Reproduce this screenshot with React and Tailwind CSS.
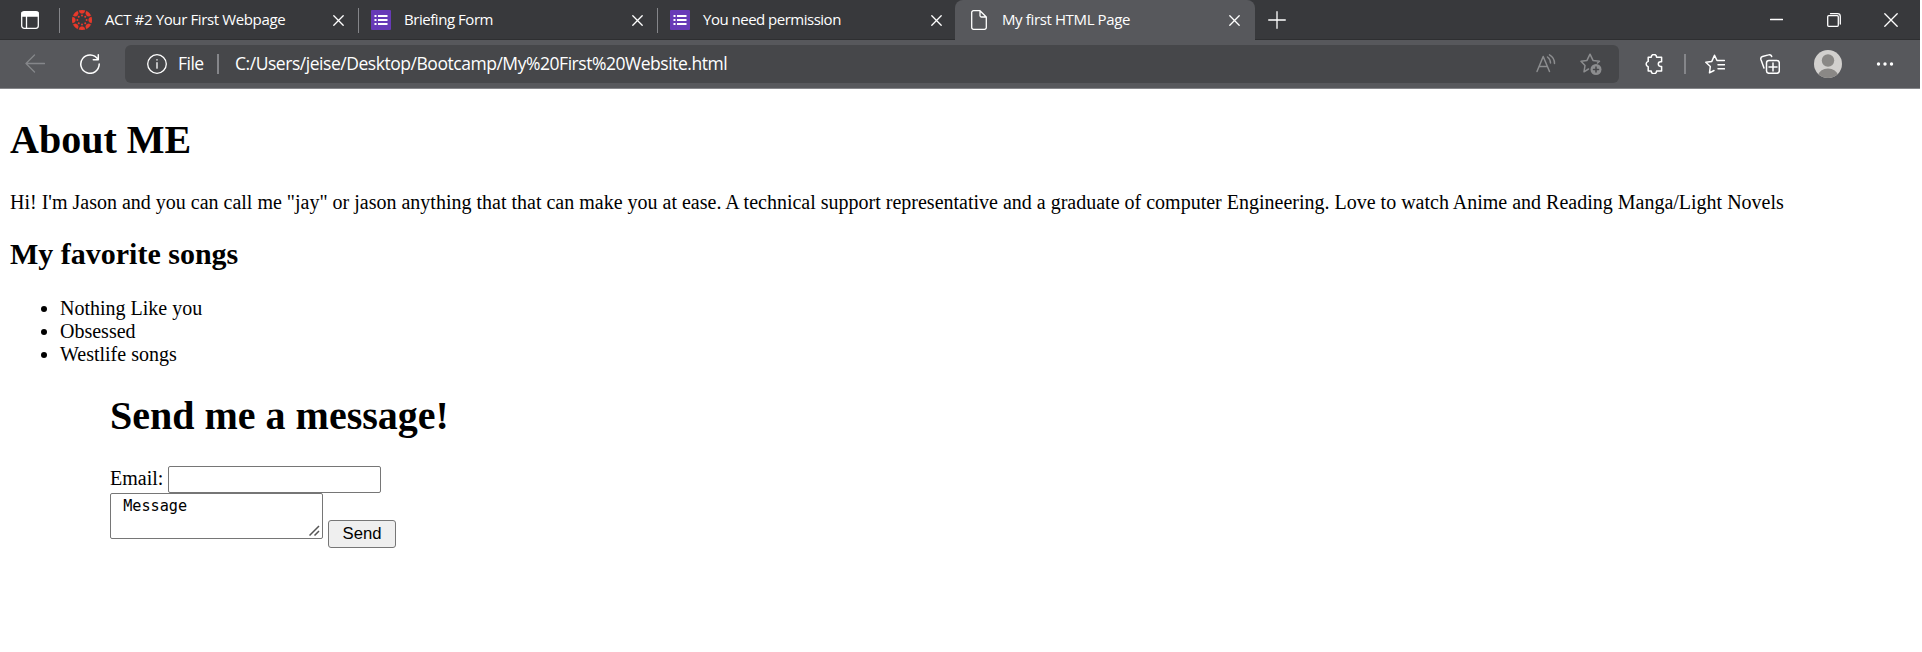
import React from "react";

const stroke = { fill: "none", stroke: "currentColor", strokeLinecap: "round", strokeLinejoin: "round" };

function Icon({ w = 20, h = 20, sw = 1.3, className = "", children }) {
  return (
    <svg width={w} height={h} viewBox={`0 0 ${w} ${h}`} strokeWidth={sw} {...stroke} className={"shrink-0 " + className}>
      {children}
    </svg>
  );
}

function CanvasLogo() {
  const angles = [0, 45, 90, 135, 180, 225, 270, 315];
  return (
    <svg width="20" height="20" viewBox="-10 -10 20 20" fill="#e8392b" className="shrink-0">
      {angles.map((a) => (
        <g key={a} transform={`rotate(${a})`}>
          <path d="M-3.100 -9.500 A10 10 0 0 1 3.100 -9.500 A3.150 3.600 0 0 1 -3.100 -9.500Z" stroke="#e8392b" strokeWidth=".3" />
          <circle cx="0" cy="-4.600" r="1" />
        </g>
      ))}
    </svg>
  );
}

function FormsLogo() {
  return (
    <svg width="20" height="20" viewBox="0 0 20 20" className="shrink-0">
      <rect width="20" height="20" rx="1" fill="#673ab7" />
      <path d="M3.5 5h2v2h-2zM3.5 9h2v2h-2zM3.5 13h2v2h-2zM7 5h9.500v2H7zM7 9h9.500v2H7zM7 13h9.500v2H7z" fill="#fff" />
    </svg>
  );
}

function FileIcon() {
  return (
    <Icon w={16} h={20} sw={1.3}>
      <path d="M2.500 .700h6.500l6.300 6.300v10.500a1.800 1.800 0 0 1-1.800 1.800h-11a1.800 1.800 0 0 1-1.800-1.800v-15a1.800 1.800 0 0 1 1.800-1.800zM9 .900v4.600a1.500 1.500 0 0 0 1.500 1.500h4.600" />
    </Icon>
  );
}

function Close() {
  return (
    <Icon w={11} h={11} sw={1.3}>
      <path d="M.8 .8l9.400 9.400M10.200 .8l-9.400 9.400" />
    </Icon>
  );
}

function Tab({ icon, title, tracking }) {
  return (
    <div className="flex h-10 w-[299px] shrink-0 items-center pr-[14px]">
      <div className="mr-[12px] h-[25px] w-px bg-[#85868a]" />
      {icon}
      <span className={"ml-[13px] flex-1 whitespace-nowrap pb-[2px] text-[15px] leading-5 " + tracking}>{title}</span>
      <Close />
    </div>
  );
}

function TabStrip() {
  return (
    <div className="flex h-10 items-center bg-[#38393c] shadow-[inset_0_-1px_0_#2e2f31]">
      <Icon w={18} h={18} className="ml-[21px] mr-[20px]">
        <rect x=".7" y=".7" width="16.600" height="16.600" rx="2.500" />
        <path d="M1 1.500h16v3.500H1z" fill="currentColor" />
        <path d="M5.500 5v12" />
      </Icon>
      <Tab icon={<CanvasLogo />} title="ACT #2 Your First Webpage" tracking="tracking-[-0.37px]" />
      <Tab icon={<FormsLogo />} title="Briefing Form" tracking="tracking-[-0.45px]" />
      <Tab icon={<FormsLogo />} title="You need permission" tracking="tracking-[-0.5px]" />
      <div className="-ml-px flex h-10 w-[300px] shrink-0 items-center rounded-t-lg bg-[#57585c] pl-[16px] pr-[15px]">
        <FileIcon />
        <span className="ml-[15px] flex-1 whitespace-nowrap pb-[2px] text-[15px] leading-5 tracking-[-0.37px]">My first HTML Page</span>
        <Close />
      </div>
      <Icon w={18} h={18} className="ml-[13px]">
        <path d="M9 .7v16.600M.7 9h16.600" />
      </Icon>
      <div className="ml-auto flex items-center pr-[22px]">
        <Icon w={13} h={14}>
          <path d="M.5 6.500h12" />
        </Icon>
        <Icon w={14} h={14} className="ml-[44px]">
          <rect x=".7" y="2.700" width="10.600" height="10.600" rx="1" />
          <path d="M3.500 .7h7a2.800 2.800 0 0 1 2.800 2.800v7.500" />
        </Icon>
        <Icon w={14} h={14} className="ml-[43px]">
          <path d="M.8 .8l12.400 12.400M13.200 .8l-12.400 12.400" />
        </Icon>
      </div>
    </div>
  );
}

function Toolbar() {
  return (
    <div className="flex h-[49px] items-center border-b border-[#85868a] bg-[#57585c]">
      <Icon className="ml-[25px] text-[#85868a]">
        <path d="M19.500 9.500H1M9.500 1L1 9.500 9.500 18" />
      </Icon>
      <Icon className="ml-[35px]" sw={1.5}>
        <path d="M17.800 5.200A9.200 9.200 0 1 0 19.200 10M18.300 .8v5h-5" />
      </Icon>
      <div className="ml-[25px] flex h-[38px] w-[1494px] shrink-0 items-center rounded-md bg-[#46474a] pl-[22px] pr-[17px] text-[17.5px]">
        <Icon>
          <circle cx="10" cy="10" r="9.300" />
          <path d="M10 8.700v5.500M10 5.700v.3" />
        </Icon>
        <span className="ml-[11px] w-[28px] whitespace-nowrap pb-px tracking-[-0.5px]">File</span>
        <div className="ml-[11px] h-5 w-[2px] bg-[#85868a]" />
        <span className="ml-[16px] flex-1 whitespace-nowrap pb-px tracking-[-0.46px]">C:/Users/jeise/Desktop/Bootcamp/My%20First%20Website.html</span>
        <Icon className="mr-[24px] text-[#8c8d8f]" sw={1.5}>
          <path d="M1 17.500L7.200 2.500l6.300 15M3.200 12.500h8M11.500 3a7.500 7.500 0 0 1 3 6M13.500 .8a10 10 0 0 1 5 8.700" />
        </Icon>
        <Icon w={22} h={22} sw={1.5} className="text-[#8c8d8f]">
          <path d="M8.500 16l-4.500 2.800 1-6.300L1 8.200l6-.8L10 1.200l3 6.200 6.500.8-2 1.800" />
          <circle cx="16" cy="16.500" r="5.500" fill="currentColor" stroke="none" />
          <path d="M16 14v5M13.500 16.500h5" stroke="#46474a" />
        </Icon>
      </div>
      <Icon className="ml-[25px]" sw={1.5}>
        <path d="M4.200 3.200h3a2.700 2.700 0 0 1 5.400 0h5v4.600h-1a2.300 2.300 0 1 0 0 4.600h1v4.600h-5a2.700 2.700 0 0 1-5.400 0h-3v-4.200a2.800 2.800 0 0 1 0-5.400z" />
      </Icon>
      <div className="ml-[20px] h-5 w-[2px] bg-[#85868a]" />
      <Icon className="ml-[19px]" sw={1.5}>
        <path d="M9 16.500l-4.500 2.300.8-6.300L.8 8.200l6-.8L9.500 1.200l2.500 5.300h7.500M13 10.700h6.500M13 14.800h6.500" />
      </Icon>
      <Icon className="ml-[35px]" sw={1.5}>
        <rect x="6.500" y="6.500" width="12.800" height="12.800" rx="2.500" />
        <path d="M13 9v8M9 13h8M4 14L.9 5.500a2.500 2.500 0 0 1 1.600-3L8.500 .9a2.500 2.500 0 0 1 3.200 1.600" />
      </Icon>
      <svg width="28" height="28" viewBox="0 0 28 28" className="ml-[34px] shrink-0">
        <clipPath id="avatar"><circle cx="14" cy="14" r="14" /></clipPath>
        <g clipPath="url(#avatar)">
          <rect width="28" height="28" fill="#d2d0ce" />
          <circle cx="14" cy="10.500" r="6.200" fill="#8a8886" />
          <ellipse cx="14" cy="25" rx="9.500" ry="6.500" fill="#8a8886" />
        </g>
      </svg>
      <svg width="18" height="4" fill="currentColor" className="ml-[34px] shrink-0">
        <circle cx="2.500" cy="2" r="1.700" /><circle cx="9" cy="2" r="1.700" /><circle cx="15.500" cy="2" r="1.700" />
      </svg>
    </div>
  );
}

export default function App() {
  return (
    <div className="h-[652px] w-[1922px] overflow-hidden bg-white">
      <header className="w-[1920px] font-['Open_Sans','Noto_Sans',sans-serif] text-white">
        <TabStrip />
        <Toolbar />
      </header>
      <main className="px-[10px] pt-[28px] font-['Liberation_Serif',serif] text-[20px] leading-[23px] text-black">
        <h1 className="text-[40px] font-bold leading-[46px]">About ME</h1>
        <p className="mt-[28px] whitespace-nowrap">
          Hi! I'm Jason and you can call me "jay" or jason anything that that can make you at ease. A technical support representative and a graduate of computer Engineering. Love to watch Anime and Reading Manga/Light Novels
        </p>
        <h2 className="mt-[23px] text-[30px] font-bold leading-[34px]">My favorite songs</h2>
        <ul className="mt-[26px] list-disc pl-[50px]">
          <li>Nothing Like you</li>
          <li>Obsessed</li>
          <li>Westlife songs</li>
        </ul>
        <form className="mt-[27px] pl-[100px]">
          <h1 className="text-[40px] font-bold leading-[46px]">Send me a message!</h1>
          <div className="mt-[27px] flex h-[27px] items-center">
            <label htmlFor="email" className="w-[58px] pb-[2px]">Email:</label>
            <input id="email" className="h-[27px] w-[213px] rounded-[2px] border border-[#767676] bg-white" />
          </div>
          <div className="flex items-start">
            <div className="relative h-[46px] w-[213px]">
              <textarea
                defaultValue=" Message"
                className="block h-[46px] w-[213px] resize-none rounded-[2px] border border-[#767676] bg-white px-[3px] py-[3px] font-['DejaVu_Sans_Mono',monospace] text-[15.2px] leading-[19px]"
              />
              <svg width="11" height="11" viewBox="0 0 11 11" fill="none" stroke="#555" strokeWidth="1.500" className="absolute bottom-[3px] right-[3px]">
                <path d="M.5 10.500l9.500-9.500M5.500 10.500l4.500-4.500" />
              </svg>
            </div>
            <button type="button" className="ml-[5px] mt-[27px] h-[28px] w-[68px] rounded-[3px] border border-[#767676] bg-[#efefef] font-['Liberation_Sans',sans-serif] text-[16.67px] leading-[20px]">
              Send
            </button>
          </div>
        </form>
      </main>
    </div>
  );
}
